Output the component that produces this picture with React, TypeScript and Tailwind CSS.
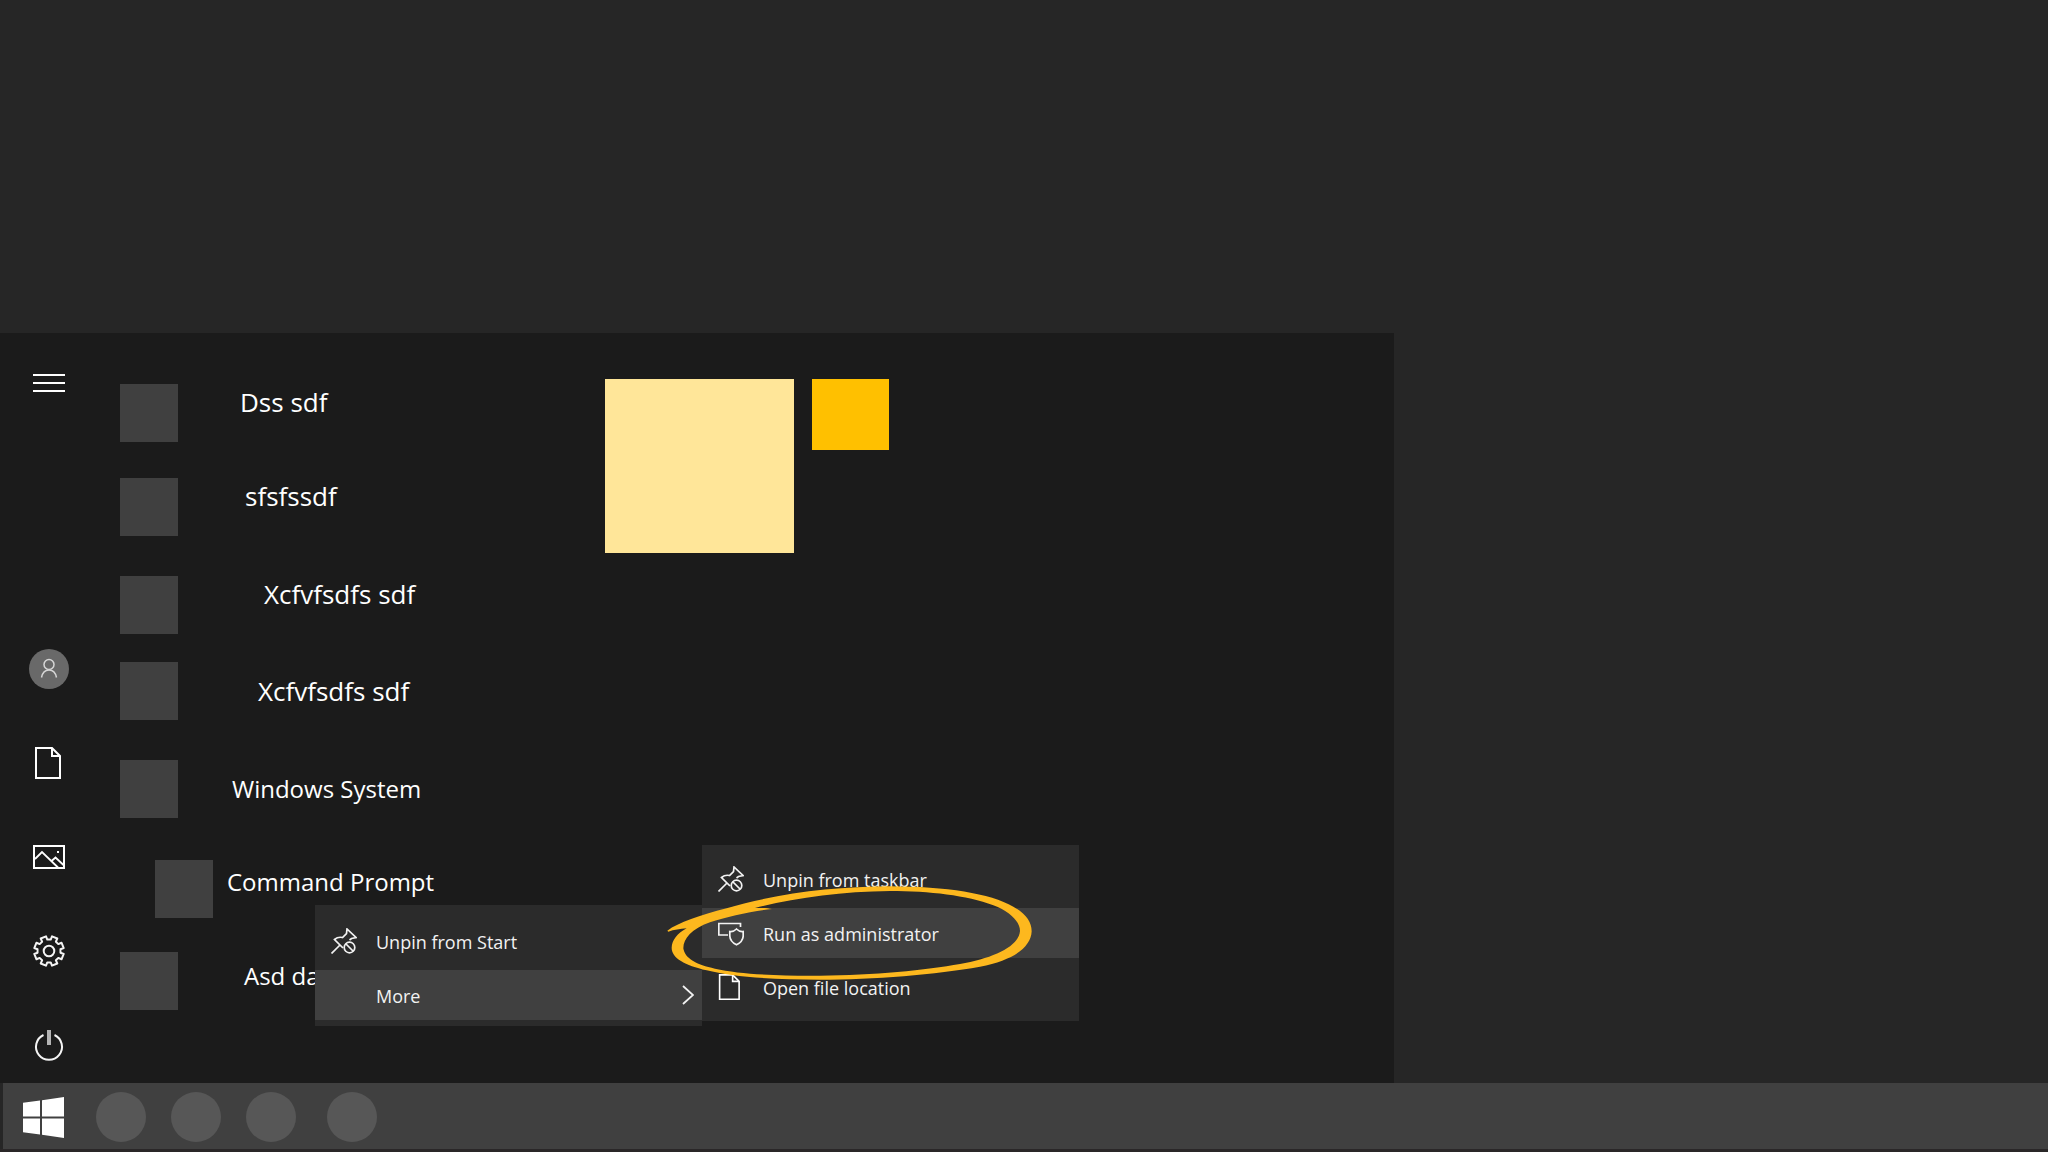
import React from "react";

function PinIcon() {
  return (
    <svg className="size-[26px] shrink-0" viewBox="0 0 26 26" fill="none" stroke="#f2f2f2" strokeWidth="1.7" aria-hidden="true">
      <path d="M0.5 25.5 L9 17" />
      <path d="M12 20 L3.5 11.5 Q7 8.5 11.5 9.5 L15.5 5.5 L16 1 L25 9.5 L20.5 10.5 L18.5 12" />
      <circle cx="18.5" cy="19.5" r="5.3" />
      <path d="M15 16 L22 23" />
    </svg>
  );
}

function ShieldIcon() {
  return (
    <svg className="size-[26px] shrink-0" viewBox="0 0 26 26" fill="none" stroke="#f2f2f2" strokeWidth="1.7" aria-hidden="true">
      <path d="M10 15 H0.8 V3.5 H22.5 V7" />
      <path d="M18.5 9 Q21.5 12 25.2 11.5 V16 Q25 21.5 18.5 24.8 Q12 21.5 11.8 16 V11.5 Q15.5 12 18.5 9 Z" />
    </svg>
  );
}

function PageIcon({ small }: { small?: boolean }) {
  return (
    <svg
      className={small ? "size-[26px] shrink-0" : "mr-0.5 h-8 w-[26px]"}
      viewBox={small ? "2 0 26 32" : "0 0 26 32"}
      fill="none"
      stroke="#fff"
      strokeWidth="2"
      aria-hidden="true"
    >
      <path d="M1 1 H17 L25 9 V31 H1 Z" />
      <path d="M17 1 V9 H25" />
    </svg>
  );
}

function GearIcon() {
  const teeth = [0, 45, 90, 135, 180, 225, 270, 315];
  const polar = (deg: number, r: number) => {
    const a = (deg * Math.PI) / 180;
    return `${(16 + r * Math.cos(a)).toFixed(2)} ${(16 + r * Math.sin(a)).toFixed(2)}`;
  };
  const outline = teeth
    .map((t) => {
      const c = t + 22.5;
      return `${polar(c - 14, 11.6)} L${polar(c - 11, 15)} L${polar(c + 11, 15)} L${polar(c + 14, 11.6)}`;
    })
    .join(" L");
  return (
    <svg className="size-8" viewBox="0 0 32 32" fill="none" stroke="#f4f4f4" strokeWidth="2" aria-hidden="true">
      <path d={`M${outline} Z`} strokeLinejoin="round" />
      <circle cx="16" cy="16" r="5.3" />
    </svg>
  );
}

const railItems = [
  {
    label: "Account",
    icon: (
      <svg className="size-10" viewBox="0 0 40 40" fill="none" aria-hidden="true">
        <circle cx="20" cy="20" r="20" fill="#696969" />
        <g stroke="#d6d6d6" strokeWidth="1.5">
          <circle cx="20" cy="15.5" r="5" />
          <path d="M12.5 28.5 Q14 21 20 21 Q26 21 27.5 28.5" />
        </g>
      </svg>
    ),
  },
  { label: "Documents", icon: <PageIcon /> },
  {
    label: "Pictures",
    icon: (
      <svg className="h-6 w-8" viewBox="0 0 32 24" fill="none" stroke="#fff" aria-hidden="true">
        <rect x="1" y="1" width="30" height="22" strokeWidth="2" />
        <path d="M2 14 L9 7 L25 22.5 M18 16.5 L22.5 12.5 L30.5 20" strokeWidth="1.8" />
        <rect x="24" y="6" width="2" height="2" fill="#fff" stroke="none" />
      </svg>
    ),
  },
  { label: "Settings", icon: <GearIcon /> },
  {
    label: "Power",
    icon: (
      <svg className="size-8" viewBox="0 0 32 32" fill="none" aria-hidden="true">
        <path d="M10.5 6 A13 13 0 1 0 21.5 6" stroke="#f4f4f4" strokeWidth="2" />
        <rect x="14" y="1" width="4" height="15" fill="#b4b4b4" />
      </svg>
    ),
  },
];

const apps = [
  { name: "Dss sdf", row: "mt-0", label: "items-start pl-[62px] text-[26px]" },
  { name: "sfsfssdf", row: "mt-9", label: "items-start pl-[67px] text-[26px]" },
  { name: "Xcfvfsdfs sdf", row: "mt-10", label: "items-start pl-[86px] text-[26px]" },
  { name: "Xcfvfsdfs sdf", row: "mt-7", label: "items-center pl-20 text-[26px]" },
  { name: "Windows System", row: "mt-10", label: "items-center pl-[54px] text-2xl" },
  { name: "Command Prompt", row: "mt-[42px] ml-[35px]", label: "items-start pt-1 pl-3.5 text-2xl" },
  { name: "Asd dasd", row: "mt-[34px]", label: "items-start pt-1.5 pl-[66px] text-2xl" },
];

function MenuItem({
  icon,
  label,
  active,
  submenu,
}: {
  icon?: React.ReactNode;
  label: string;
  active?: boolean;
  submenu?: boolean;
}) {
  return (
    <button
      role="menuitem"
      className={`flex h-[50px] w-full items-center gap-[19px] px-4 text-left text-lg leading-6 text-[#f2f2f2] ${active ? "bg-[#404040]" : ""}`}
    >
      {icon ?? <span className="size-[26px] shrink-0" />}
      <span className="flex-1 pt-0.5 whitespace-nowrap">{label}</span>
      {submenu && (
        <svg className="-mr-2 h-5 w-3" viewBox="0 0 12 20" fill="none" stroke="#f2f2f2" strokeWidth="1.8" aria-hidden="true">
          <path d="M1 1 L11 10 L1 19" />
        </svg>
      )}
    </button>
  );
}

export default function App() {
  return (
    <div className="flex min-h-screen flex-col overflow-hidden bg-[#262626] font-['Open_Sans','Noto_Sans',sans-serif] text-white">
      <div className="flex-1" />

      <main className="relative flex w-[1394px] max-w-full bg-[#1b1b1b]">
        <nav className="flex w-[98px] shrink-0 flex-col items-center justify-between pt-[26px] pb-[14px]" aria-label="Start">
          <button aria-label="Expand" className="flex size-12 items-center justify-center">
            <svg className="h-[18px] w-8" viewBox="0 0 32 18" aria-hidden="true">
              <path d="M0 1 H32 M0 9 H32 M0 17 H32" stroke="#fff" strokeWidth="2" />
            </svg>
          </button>
          <div className="flex flex-col gap-[46px]">
            {railItems.map((item) => (
              <button key={item.label} aria-label={item.label} className="flex size-12 items-center justify-center">
                {item.icon}
              </button>
            ))}
          </div>
        </nav>

        <ul className="w-[507px] shrink-0 pt-[51px] pb-[73px] pl-[22px]">
          {apps.map((app, i) => (
            <li key={i} className={app.row}>
              <button className="flex h-[58px] w-full text-left">
                <span className="size-[58px] shrink-0 bg-[#404040]" />
                <span className={`flex h-full leading-9 whitespace-nowrap ${app.label}`}>{app.name}</span>
              </button>
            </li>
          ))}
        </ul>

        <section className="flex items-start gap-[18px] pt-[46px]" aria-label="Pinned tiles">
          <button aria-label="Large tile" className="h-[174px] w-[189px] bg-[#ffe699]" />
          <button aria-label="Small tile" className="h-[71px] w-[77px] bg-[#ffc000]" />
        </section>

        <div role="menu" className="absolute top-[572px] left-[315px] flex w-[387px] flex-col gap-1 bg-[#2b2b2b] pt-[11px] pb-1.5">
          <MenuItem icon={<PinIcon />} label="Unpin from Start" />
          <MenuItem label="More" active submenu />
        </div>
        <div role="menu" className="absolute top-[512px] left-[702px] flex w-[377px] flex-col gap-1 bg-[#2b2b2b] py-[9px]">
          <MenuItem icon={<PinIcon />} label="Unpin from taskbar" />
          <MenuItem icon={<ShieldIcon />} label="Run as administrator" active />
          <MenuItem icon={<PageIcon small />} label="Open file location" />
        </div>

        <svg
          className="pointer-events-none absolute top-[547px] left-[660px] h-[100px] w-[380px]"
          viewBox="0 150 1140 300"
          fill="#fdb81e"
          fillRule="evenodd"
          aria-hidden="true"
        >
          <path d="M22 302 C55 278 120 255 200 235 C350 190 520 170 690 169 C860 170 990 190 1060 230 C1098 252 1115 275 1115 304 C1113 350 1065 390 960 410 C830 433 640 449 480 449 C330 449 215 440 140 421 C75 405 35 385 35 353 C36 330 52 310 80 295 C60 297 42 299 25 305 Z M285 234 C310 233 325 234 336 237 C280 243 200 260 150 277 C95 297 70 325 70 355 C74 385 110 405 165 416 C240 433 360 438 480 437 C640 436 800 420 900 402 C1000 384 1076 350 1080 303 C1080 275 1050 245 1000 226 C920 196 810 183 690 183 C540 184 400 205 285 234 Z" />
        </svg>
      </main>

      <footer className="ml-[3px] flex h-[66px] items-center bg-[#404040] pt-0.5 pl-5">
        <button aria-label="Start menu">
          <svg className="size-[41px]" viewBox="0 0 41 41" fill="#fff" aria-hidden="true">
            <path d="M0 5.8 L17 3.5 V19.5 H0 Z M19 3.2 L41 0 V19.5 H19 Z M0 21.5 H17 V37.5 L0 35.2 Z M19 21.5 H41 V41 L19 37.8 Z" />
          </svg>
        </button>
        <div className="ml-8 flex gap-[25px]">
          <button aria-label="App 1" className="size-[50px] rounded-full bg-[#575757]" />
          <button aria-label="App 2" className="size-[50px] rounded-full bg-[#575757]" />
          <button aria-label="App 3" className="size-[50px] rounded-full bg-[#575757]" />
          <button aria-label="App 4" className="ml-1.5 size-[50px] rounded-full bg-[#575757]" />
        </div>
      </footer>
      <div className="h-[3px] bg-[#2a2728]" />
    </div>
  );
}
